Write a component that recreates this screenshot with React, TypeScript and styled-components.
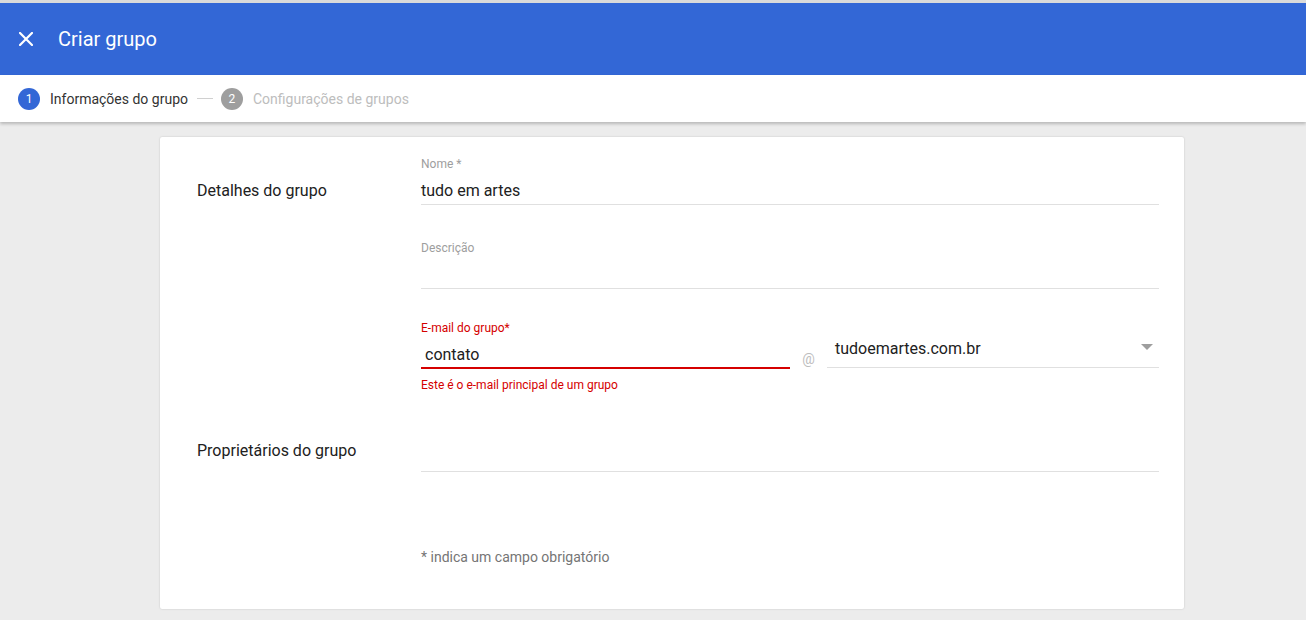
import React from 'react';
import styled, { createGlobalStyle } from 'styled-components';

const GlobalStyle = createGlobalStyle`
  html, body {
    margin: 0;
    padding: 0;
    background: #ececec;
    font-family: Roboto, "Liberation Sans", Arial, sans-serif;
  }
`;

const Page = styled.div`
  min-height: 620px;
  border-top: 3px solid #dadada;
  box-sizing: border-box;
`;

const Header = styled.header`
  height: 72px;
  background: #3367d6;
  display: flex;
  align-items: center;
  padding-left: 19px;
  gap: 25px;
  color: #fff;
`;

const Title = styled.h1`
  margin: 0;
  font-size: 20px;
  font-weight: 400;
  line-height: 24px;
`;

const Stepper = styled.nav`
  position: relative;
  height: 47px;
  background: #fff;
  display: flex;
  align-items: center;
  padding-left: 18px;
  box-shadow: 0 2px 3px rgba(0, 0, 0, 0.22);
`;

const StepCircle = styled.span<{ active?: boolean }>`
  width: 22px;
  height: 22px;
  border-radius: 50%;
  background: ${p => (p.active ? '#3367d6' : '#9e9e9e')};
  color: #fff;
  font-size: 12px;
  display: flex;
  align-items: center;
  justify-content: center;
  margin-right: 10px;
`;

const StepLabel = styled.span<{ active?: boolean }>`
  font-size: 14px;
  color: ${p => (p.active ? '#333' : '#bdbdbd')};
`;

const StepLine = styled.span`
  width: 16px;
  height: 1px;
  background: #d0d0d0;
  margin: 0 8px 0 9px;
`;

const Card = styled.main`
  margin: 15px 0 0 160px;
  width: 1024px;
  background: #fff;
  border-radius: 2px;
  box-shadow: 0 0 2px rgba(0, 0, 0, 0.18);
  box-sizing: border-box;
  padding: 19px 25px 42px 37px;
`;

const Section = styled.section<{ top?: number }>`
  display: grid;
  grid-template-columns: 224px 1fr;
  margin-top: ${p => p.top ?? 0}px;
`;

const SectionTitle = styled.div<{ offset: number }>`
  font-size: 16px;
  line-height: 22px;
  color: #212121;
  padding-top: ${p => p.offset}px;
`;

const Fields = styled.div`
  display: flex;
  flex-direction: column;
`;

const Field = styled.div<{ top?: number }>`
  margin-top: ${p => p.top ?? 0}px;
`;

const FieldLabel = styled.div<{ error?: boolean }>`
  font-size: 12px;
  line-height: 16px;
  color: ${p => (p.error ? '#d50000' : '#9e9e9e')};
`;

const Input = styled.div<{ error?: boolean; inset?: number }>`
  font-size: 16px;
  line-height: 22px;
  height: 22px;
  color: #212121;
  padding: 8px 0 ${p => (p.error ? 1 : 2)}px ${p => p.inset ?? 0}px;
  border-bottom: ${p => (p.error ? '2px solid #d50000' : '1px solid #e0e0e0')};
`;

const HelperText = styled.div`
  margin-top: 8px;
  font-size: 12px;
  line-height: 16px;
  color: #d50000;
`;

const EmailRow = styled.div`
  display: flex;
  align-items: flex-end;
`;

const EmailField = styled.div`
  width: 369px;
`;

const At = styled.span`
  width: 37px;
  text-align: center;
  font-size: 14px;
  color: #bdbdbd;
  line-height: 20px;
`;

const Select = styled.div`
  flex: 1;
  display: flex;
  align-items: center;
  justify-content: space-between;
  font-size: 16px;
  line-height: 22px;
  color: #212121;
  padding: 0 6px 7px 8px;
  border-bottom: 1px solid #e0e0e0;
  margin-bottom: 1px;
`;

const Arrow = styled.span`
  width: 0;
  height: 0;
  border-left: 6px solid transparent;
  border-right: 6px solid transparent;
  border-top: 6px solid #9e9e9e;
  margin-top: -4px;
`;

const Note = styled.p`
  margin: 75px 0 0 224px;
  font-size: 14px;
  line-height: 20px;
  color: #757575;
`;

const CloseIcon = () => (
  <svg width="14" height="14" viewBox="0 0 14 14">
    <path d="M1 1L13 13M13 1L1 13" stroke="#fff" strokeWidth="2.2" strokeLinecap="square" />
  </svg>
);

export default function App() {
  return (
    <Page>
      <GlobalStyle />
      <Header>
        <CloseIcon />
        <Title>Criar grupo</Title>
      </Header>
      <Stepper>
        <StepCircle active>1</StepCircle>
        <StepLabel active>Informações do grupo</StepLabel>
        <StepLine />
        <StepCircle>2</StepCircle>
        <StepLabel>Configurações de grupos</StepLabel>
      </Stepper>
      <Card>
        <Section>
          <SectionTitle offset={24}>Detalhes do grupo</SectionTitle>
          <Fields>
            <Field>
              <FieldLabel>Nome *</FieldLabel>
              <Input>tudo em artes</Input>
            </Field>
            <Field top={35}>
              <FieldLabel>Descrição</FieldLabel>
              <Input />
            </Field>
            <Field top={31}>
              <FieldLabel error>E-mail do grupo*</FieldLabel>
              <EmailRow>
                <EmailField>
                  <Input error inset={4}>contato</Input>
                </EmailField>
                <At>@</At>
                <Select>
                  <span>tudoemartes.com.br</span>
                  <Arrow />
                </Select>
              </EmailRow>
              <HelperText>Este é o e-mail principal de um grupo</HelperText>
            </Field>
          </Fields>
        </Section>
        <Section top={46}>
          <SectionTitle offset={1}>Proprietários do grupo</SectionTitle>
          <Fields>
            <Field>
              <Input />
            </Field>
          </Fields>
        </Section>
        <Note>* indica um campo obrigatório</Note>
      </Card>
    </Page>
  );
}
